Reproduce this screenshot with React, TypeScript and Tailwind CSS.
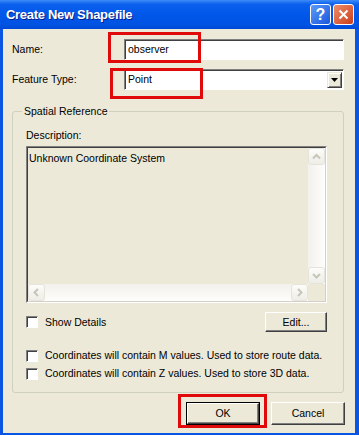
function Chevron({ dir }: { dir: "up" | "down" | "left" | "right" }) {
  const d = {
    up: "M5 10.5 L8.5 7 L12 10.5",
    down: "M5 7 L8.5 10.5 L12 7",
    left: "M10 5 L6.5 8.5 L10 12",
    right: "M7 5 L10.5 8.5 L7 12",
  }[dir];
  return (
    <svg width="15" height="15" viewBox="1 1 15 15">
      <path d={d} stroke="#C6C5BA" strokeWidth="2" fill="none" />
    </svg>
  );
}

function ScrollButton({ dir }: { dir: "up" | "down" | "left" | "right" }) {
  return (
    <div className="flex h-[17px] w-[17px] shrink-0 items-center justify-center rounded-[3px] border border-[#E6E4DA] bg-linear-to-b from-[#FCFCFA] to-[#EEEDE6]">
      <Chevron dir={dir} />
    </div>
  );
}

function Checkbox() {
  return (
    <div className="h-[12px] w-[12px] shrink-0 border border-t-[#808080] border-l-[#808080] border-r-white border-b-white bg-white shadow-[inset_1px_1px_0_#404040]" />
  );
}

function Button({ label, isDefault }: { label: string; isDefault?: boolean }) {
  if (isDefault) {
    return (
      <div className="h-[23px] w-[74px] border border-black">
        <div className="flex h-full w-full items-center justify-center border border-t-white border-l-white border-r-[#404040] border-b-[#404040] bg-[#ECE9D8] shadow-[inset_-1px_-1px_0_#808080]">
          {label}
        </div>
      </div>
    );
  }
  return (
    <div className="flex h-[23px] w-[74px] items-center justify-center border border-t-white border-l-white border-r-[#404040] border-b-[#404040] bg-[#ECE9D8] shadow-[inset_-1px_-1px_0_#808080]">
      {label}
    </div>
  );
}

export default function App() {
  return (
    <div className="relative flex h-[435px] w-[359px] flex-col bg-[#0A55E2] font-['Liberation_Sans',Arial,sans-serif] text-[10.5px] leading-[13px] text-black">
      {/* Title bar */}
      <div className="flex h-[29px] shrink-0 items-center justify-between bg-[linear-gradient(to_bottom,#3D8DF7_0%,#0C60EE_14%,#0057E8_50%,#0053E3_85%,#0048D6_100%)] pl-[6px] pr-[5px]">
        <span className="text-[13px] font-bold tracking-[-0.3px] text-white [text-shadow:1px_1px_0_#0A1E8A]">
          Create New Shapefile
        </span>
        <div className="flex gap-[2px]">
          <div className="flex h-[21px] w-[21px] items-center justify-center rounded-[3px] border border-white bg-linear-to-br from-[#5E9BF8] to-[#1A54DC] text-[16px] font-bold text-white">
            ?
          </div>
          <div className="flex h-[21px] w-[21px] items-center justify-center rounded-[3px] border border-white bg-linear-to-br from-[#EE8C68] to-[#CC3A14]">
            <svg width="11" height="11" viewBox="0 0 11 11">
              <path d="M1.5 1.5 L9.5 9.5 M9.5 1.5 L1.5 9.5" stroke="white" strokeWidth="2" />
            </svg>
          </div>
        </div>
      </div>

      {/* Body */}
      <div className="mb-[2px] ml-[3px] mr-[4px] flex min-h-0 flex-1 flex-col bg-[#ECE9D8]">
        <div className="mt-[10px] flex shrink-0 items-center pl-[9px] pr-[11px]">
          <span className="flex-1">Name:</span>
          <div className="flex h-[21px] w-[220px] items-center border border-t-[#808080] border-l-[#808080] border-r-white border-b-white bg-white pl-[3px] shadow-[inset_1px_1px_0_#404040]">
            observer
          </div>
        </div>
        <div className="mt-[9px] flex shrink-0 items-center pl-[9px] pr-[11px]">
          <span className="flex-1">Feature Type:</span>
          <div className="flex h-[21px] w-[220px] items-center justify-between border border-t-[#808080] border-l-[#808080] border-r-white border-b-white bg-white pl-[3px] pr-[1px] shadow-[inset_1px_1px_0_#404040]">
            <span>Point</span>
            <div className="flex h-[16px] w-[15px] items-center justify-center border border-t-[#ECE9D8] border-l-[#ECE9D8] border-r-[#404040] border-b-[#404040] bg-[#ECE9D8] shadow-[inset_1px_1px_0_white,inset_-1px_-1px_0_#808080]">
              <svg width="7" height="4" viewBox="0 0 7 4">
                <path d="M0 0 H7 L3.5 4 Z" fill="black" />
              </svg>
            </div>
          </div>
        </div>

        <fieldset className="ml-[9px] mr-[11px] mt-[15px] shrink-0 rounded-[3px] border border-[#D0D0BF] pb-[12px] pl-[13px] pr-[16px]">
          <legend className="-ml-[4px] px-[2px]">Spatial Reference</legend>
          <div className="mt-[11px]">Description:</div>
          <div className="mt-[4px] h-[157px] w-[301px] border border-t-[#808080] border-l-[#808080] border-r-white border-b-white">
            <div className="grid h-full w-full grid-cols-[1fr_17px] grid-rows-[1fr_17px] border border-t-[#404040] border-l-[#404040] border-r-[#D4D0C8] border-b-[#D4D0C8] bg-[#ECE9D8]">
              <div className="pl-[1px] pt-[4px]">Unknown Coordinate System</div>
              <div className="flex flex-col justify-between bg-linear-to-r from-[#F3F1EC] to-[#FDFDFB]">
                <ScrollButton dir="up" />
                <ScrollButton dir="down" />
              </div>
              <div className="flex justify-between bg-linear-to-b from-[#F3F1EC] to-[#FDFDFB]">
                <ScrollButton dir="left" />
                <ScrollButton dir="right" />
              </div>
              <div className="bg-[#ECE9D8]" />
            </div>
          </div>
          <div className="mt-[9px] flex h-[20px] items-center">
            <Checkbox />
            <span className="ml-[7px] flex-1">Show Details</span>
            <div className="flex h-[20px] w-[62px] items-center justify-center border border-t-white border-l-white border-r-[#404040] border-b-[#404040] bg-[#ECE9D8] shadow-[inset_-1px_-1px_0_#808080]">
              Edit...
            </div>
          </div>
          <div className="mt-[17px] flex items-center">
            <Checkbox />
            <span className="ml-[7px] whitespace-nowrap">Coordinates will contain M values. Used to store route data.</span>
          </div>
          <div className="mt-[5px] flex items-center">
            <Checkbox />
            <span className="ml-[7px] whitespace-nowrap">Coordinates will contain Z values. Used to store 3D data.</span>
          </div>
        </fieldset>

        <div className="mt-[9px] flex shrink-0 justify-end gap-[11px] pr-[10px]">
          <Button label="OK" isDefault />
          <Button label="Cancel" />
        </div>
      </div>

      {/* Red highlight annotations */}
      <div className="absolute left-[108px] top-[32px] h-[31px] w-[93px] border-[3px] border-[#E10A0A]" />
      <div className="absolute left-[110px] top-[68px] h-[31px] w-[93px] border-[3px] border-[#E10A0A]" />
      <div className="absolute left-[178px] top-[394px] h-[34px] w-[89px] border-[3px] border-[#E10A0A]" />
    </div>
  );
}
